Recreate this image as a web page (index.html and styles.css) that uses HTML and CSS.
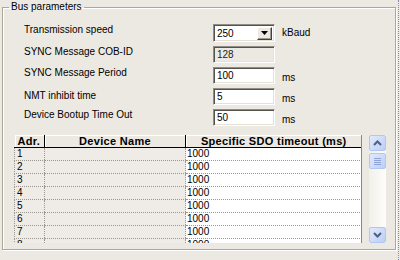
FILE: index.html
```html
<!DOCTYPE html>
<html>
<head>
<meta charset="utf-8">
<link rel="stylesheet" href="styles.css">
</head>
<body>
<fieldset class="group">
  <legend class="legend">Bus parameters</legend>
  <div class="inner">
    <div class="params">
      <div class="lbl">Transmission speed</div>
      <div class="combo"><span class="cval">250</span><span class="drop"><svg width="7" height="4" viewBox="0 0 7 4"><path d="M0 0H7L3.5 4Z" fill="#000"/></svg></span></div>
      <div class="unit mid">kBaud</div>

      <div class="lbl">SYNC Message COB-ID</div>
      <div class="field disabled">128</div>
      <div></div>

      <div class="lbl">SYNC Message Period</div>
      <div class="field">100</div>
      <div class="unit">ms</div>

      <div class="lbl low">NMT inhibit time</div>
      <div class="field">5</div>
      <div class="unit">ms</div>

      <div class="lbl">Device Bootup Time Out</div>
      <div class="field">50</div>
      <div class="unit">ms</div>
    </div>

    <div class="listarea">
      <div class="gridbox">
        <table class="grid">
          <thead>
            <tr><th class="c1">Adr.</th><th class="c2 ctr">Device Name</th><th class="c3 ctr">Specific SDO timeout (ms)</th></tr>
          </thead>
          <tbody>
            <tr><td class="c1">1</td><td class="c2"></td><td class="c3">1000</td></tr>
            <tr><td class="c1">2</td><td class="c2"></td><td class="c3">1000</td></tr>
            <tr><td class="c1">3</td><td class="c2"></td><td class="c3">1000</td></tr>
            <tr><td class="c1">4</td><td class="c2"></td><td class="c3">1000</td></tr>
            <tr><td class="c1">5</td><td class="c2"></td><td class="c3">1000</td></tr>
            <tr><td class="c1">6</td><td class="c2"></td><td class="c3">1000</td></tr>
            <tr><td class="c1">7</td><td class="c2"></td><td class="c3">1000</td></tr>
            <tr><td class="c1">8</td><td class="c2"></td><td class="c3">1000</td></tr>
          </tbody>
        </table>
      </div>
      <div class="scrollbar">
        <div class="sbtn"><svg width="9" height="6" viewBox="0 0 9 6"><path d="M1 5L4.5 1.5L8 5" fill="none" stroke="#4d6185" stroke-width="2"/></svg></div>
        <div class="thumb"><span></span><span></span><span></span><span></span></div>
        <div class="spacer"></div>
        <div class="sbtn"><svg width="9" height="6" viewBox="0 0 9 6"><path d="M1 1L4.5 4.5L8 1" fill="none" stroke="#4d6185" stroke-width="2"/></svg></div>
      </div>
    </div>
  </div>
</fieldset>
<div class="edge"></div>
</body>
</html>
```
FILE: styles.css
```css
html, body {
  margin: 0;
  padding: 0;
  width: 400px;
  height: 260px;
  overflow: hidden;
}
body {
  background: #ece9e2;
  font: 10px "Liberation Sans", Arial, sans-serif;
  color: #000;
  display: flex;
  align-items: flex-start;
}
.group {
  box-sizing: border-box;
  width: 394px;
  margin: 0 0 0 2px;
  padding: 0;
  border: 1px solid #aca899;
  box-shadow: inset 1px 1px 0 #fff, 1px 1px 0 #fff;
  min-width: 0;
}
.legend {
  margin-left: 6px;
  padding: 0 2px;
  line-height: 14px;
  font-size: 10px;
}
.inner {
  padding: 0 0 6px 11px;
}
.params {
  display: grid;
  grid-template-columns: 189px 69px auto;
  grid-template-rows: 18px 17px 17px 17px 17px;
  row-gap: 4px;
  margin: 10px 0 0 10px;
}
.lbl {
  align-self: start;
  line-height: 12px;
  padding-top: 0;
}
.lbl.low {
  padding-top: 2px;
}
.unit {
  align-self: end;
  line-height: 12px;
}
.unit.mid {
  align-self: center;
}
.field, .combo {
  box-sizing: border-box;
  width: 62px;
  height: 100%;
  background: #fff;
  border: 1px solid;
  border-color: #8e8c84 #fff #fff #8e8c84;
  box-shadow: inset 1px 1px 0 #55534c, inset -1px -1px 0 #e4e1d8;
  padding: 0 0 0 3px;
  display: flex;
  align-items: center;
}
.field.disabled {
  background: #ece9e2;
  color: #222;
}
.combo {
  padding-right: 2px;
  justify-content: space-between;
}
.drop {
  box-sizing: border-box;
  width: 15px;
  height: 13px;
  background: #ece9e2;
  border: 1px solid;
  border-color: #fff #404040 #404040 #fff;
  box-shadow: inset -1px -1px 0 #9d9a90;
  display: flex;
  align-items: center;
  justify-content: center;
}
.listarea {
  display: flex;
  gap: 7px;
  margin-top: 9px;
}
.gridbox {
  width: 348px;
  height: 108px;
  overflow: hidden;
  border-right: 1px solid #8a887f;
  box-sizing: border-box;
}
.grid {
  border-collapse: collapse;
  table-layout: fixed;
  width: 347px;
}
.grid th {
  box-sizing: border-box;
  height: 12px;
  padding: 0 0 0 3px;
  font-size: 11px;
  font-weight: bold;
  letter-spacing: 0.3px;
  text-align: left;
  line-height: 10px;
  background: #ece9e2;
  border-right: 1px solid #000;
  border-bottom: 1px solid #000;
  box-shadow: inset 1px 1px 0 #fff;
  white-space: nowrap;
  overflow: hidden;
}
.grid th.ctr {
  text-align: center;
  padding: 0;
}
.grid th.c3 {
  border-right: 0;
}
.grid .c1 { width: 30px; }
.grid .c2 { width: 141px; }
.grid .c3 { width: 176px; }
.grid td {
  box-sizing: border-box;
  height: 13px;
  padding: 0 0 0 2px;
  line-height: 12px;
  background: #efece7;
  border-bottom: 1px dotted #9a9890;
  border-left: 1px dotted #9a9890;
  white-space: nowrap;
}
.grid td.c3 {
  background: #fff;
  padding-left: 1px;
}
.scrollbar {
  box-sizing: border-box;
  width: 17px;
  height: 108px;
  background: linear-gradient(90deg, #f2f0ea, #fdfdfb);
  display: flex;
  flex-direction: column;
}
.sbtn, .thumb {
  box-sizing: border-box;
  width: 17px;
  height: 16px;
  border: 1px solid #b3c6f2;
  border-radius: 2px;
  background: linear-gradient(135deg, #e2eafd, #bccdf7);
  display: flex;
  align-items: center;
  justify-content: center;
}
.thumb {
  margin-top: 2px;
  flex-direction: column;
  gap: 1px;
}
.thumb span {
  display: block;
  width: 7px;
  height: 1px;
  background: #8ea4d6;
}
.spacer {
  flex: 1;
}
.edge {
  width: 0;
  height: 260px;
  margin-left: 2px;
  border-left: 1px dotted #7f8fb6;
}
```
